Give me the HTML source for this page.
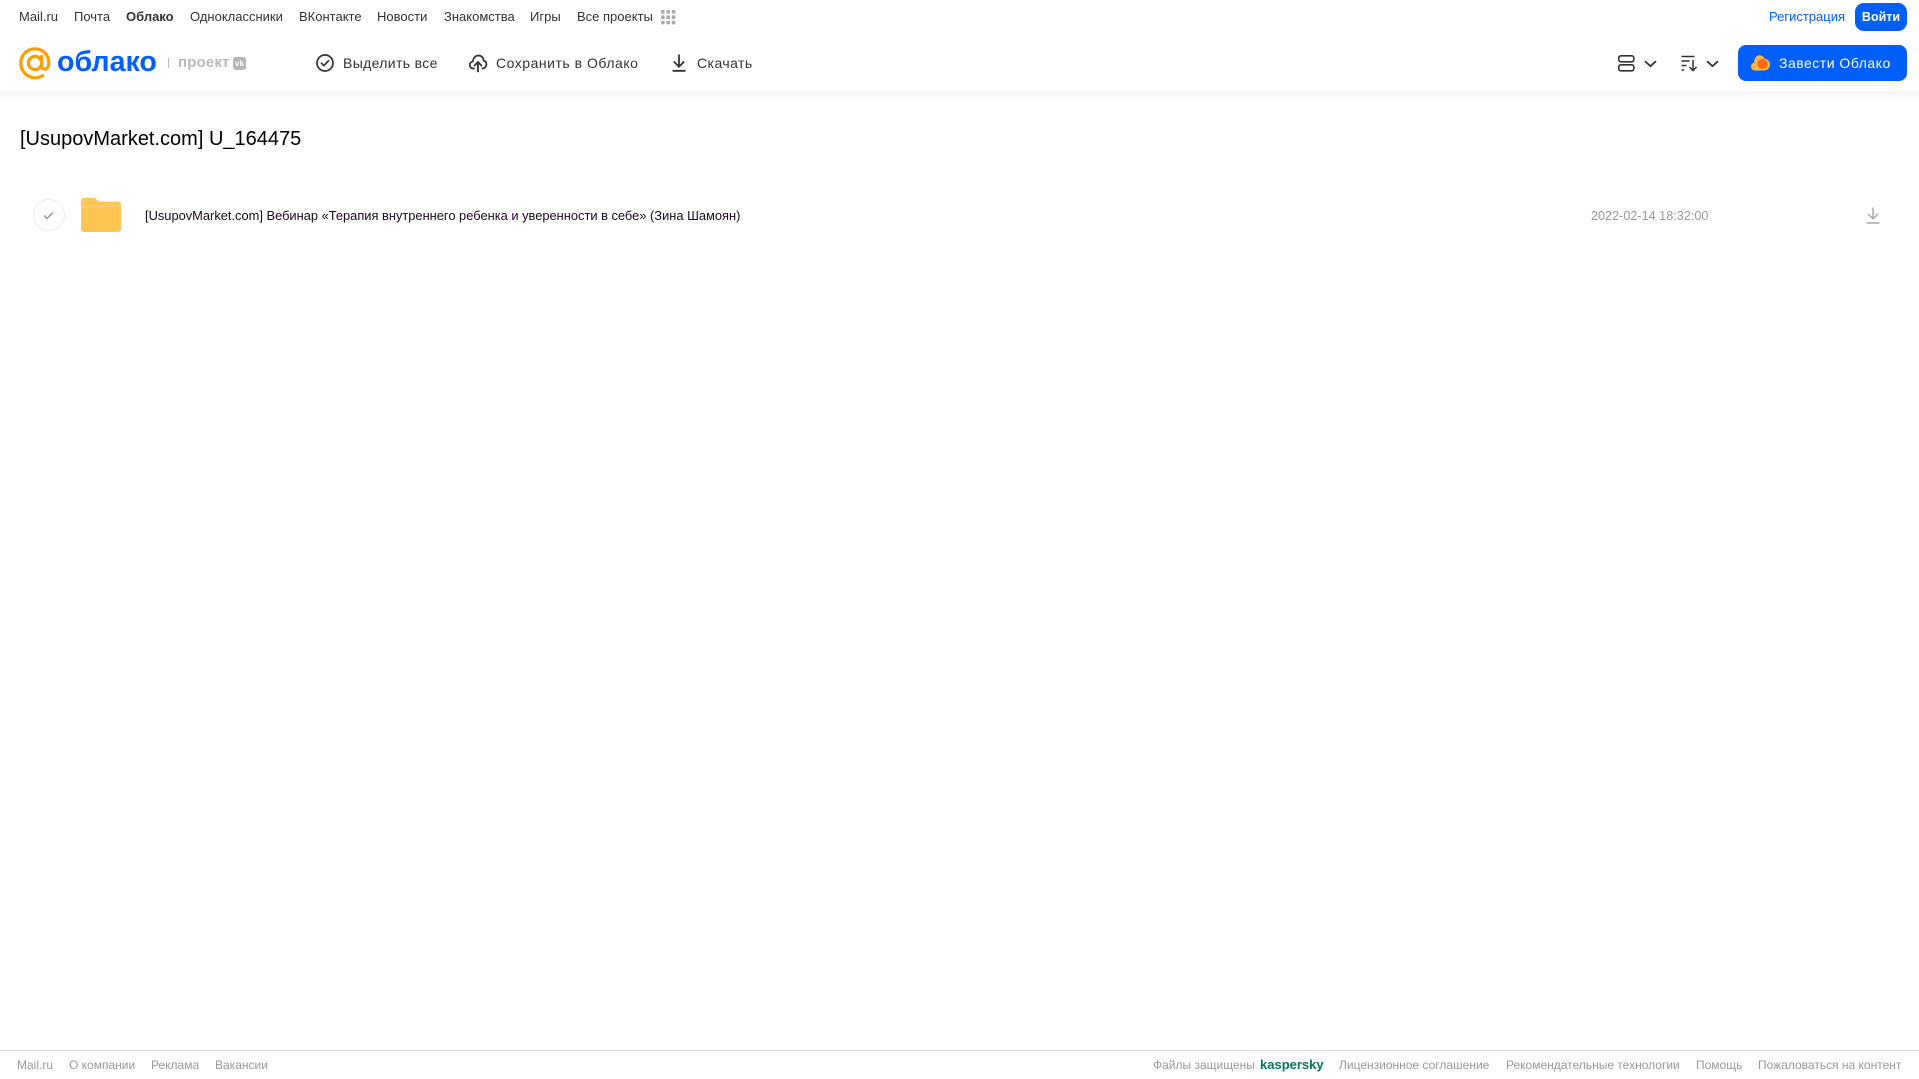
<!DOCTYPE html>
<html lang="ru"><head><meta charset="utf-8"><title>Облако</title>
<style>
html,body{margin:0;padding:0;background:#fff;overflow:hidden}
#p{position:relative;width:1919px;height:1079px;overflow:hidden;font-family:"Liberation Sans",Arial,sans-serif;background:#fff}
.t{position:absolute;white-space:nowrap;line-height:20px;height:20px}
.n{top:7px;font-size:13px;color:#333}
.b{top:53px;font-size:14px;color:#333}
.f{top:1055px;font-size:12px;color:#999}
svg{position:absolute;overflow:visible}
</style></head><body><div id="p">
<div style="position:absolute;left:0;top:91px;width:1919px;height:9px;background:linear-gradient(#f3f3f3,#fff)"></div>

<span class="t n" style="left:19px">Mail.ru</span>
<span class="t n" style="left:74px">Почта</span>
<span class="t n" style="left:126px;font-weight:700">Облако</span>
<span class="t n" style="left:190px">Одноклассники</span>
<span class="t n" style="left:299px">ВКонтакте</span>
<span class="t n" style="left:377px">Новости</span>
<span class="t n" style="left:444px">Знакомства</span>
<span class="t n" style="left:530px">Игры</span>
<span class="t n" style="left:577px">Все проекты</span>
<svg style="left:661px;top:10px" width="15" height="15" fill="#aaa"><rect width="3.6" height="3.6" rx=".8"/><rect x="5.4" width="3.6" height="3.6" rx=".8"/><rect x="10.8" width="3.6" height="3.6" rx=".8"/><rect y="5.4" width="3.6" height="3.6" rx=".8"/><rect x="5.4" y="5.4" width="3.6" height="3.6" rx=".8"/><rect x="10.8" y="5.4" width="3.6" height="3.6" rx=".8"/><rect y="10.8" width="3.6" height="3.6" rx=".8"/><rect x="5.4" y="10.8" width="3.6" height="3.6" rx=".8"/><rect x="10.8" y="10.8" width="3.6" height="3.6" rx=".8"/></svg>

<svg style="left:19px;top:47px" width="33" height="33" fill="none" stroke="#ff9e00" stroke-width="3.2"><circle cx="16" cy="16" r="6.6"/><path d="M22.600 9.500v9.200c0 5 7.200 5 7.200-2.700C29.800 8 24 1.800 16 1.800 8.200 1.800 1.800 8.200 1.800 16.200s6.400 14.600 14.200 14.600c3 0 5.500-.7 7.700-2.100" stroke-linecap="round"/></svg>
<span class="t" style="left:57px;top:47px;font-size:28.6px;line-height:30px;height:30px;font-weight:700;color:#005ff9">облако</span>
<div style="position:absolute;left:168px;top:58px;width:1px;height:10px;background:#bbb"></div>
<span class="t" style="left:178px;top:53px;font-size:15px;font-weight:700;color:#b9b9b9;letter-spacing:.15px">проект</span>
<div style="position:absolute;left:233px;top:57px;width:13px;height:13px;border-radius:3px;background:#b4b4b4;color:#fff;font:700 8px/13px 'Liberation Sans',sans-serif;text-align:center">vk</div>

<svg style="left:316px;top:54px" width="18" height="18" fill="none" stroke="#333" stroke-width="1.700"><circle cx="9" cy="9" r="8"/><path d="M5.500 9.300l2.400 2.300 4.700-4.900" stroke-linecap="round" stroke-linejoin="round"/></svg>
<span class="t b" style="left:343px;letter-spacing:.35px">Выделить все</span>
<svg style="left:469px;top:54px" width="18" height="18" fill="none" stroke="#333" stroke-width="1.800" stroke-linecap="round" stroke-linejoin="round"><path d="M5 14.500H4.300C2.200 14.500.8 13 .8 11c0-1.800 1.300-3.300 3-3.500C4.300 4.200 6.300 1.500 9.500 1.500c3 0 5 2.400 5.200 5 1.600.4 2.700 2 2.700 3.700 0 2.300-1.600 4.300-4 4.300"/><path d="M9 17.500V8.500M5.600 11.500L9 8l3.400 3.500"/></svg>
<span class="t b" style="left:496px;letter-spacing:.52px">Сохранить в Облако</span>
<svg style="left:672px;top:54px" width="14" height="18" fill="none" stroke="#333" stroke-width="1.800"><path d="M7 .5v12M1.800 7.500L7 12.700l5.200-5.200M.5 16.800h13"/></svg>
<span class="t b" style="left:697px;letter-spacing:.45px">Скачать</span>

<span class="t n" style="left:1769px;color:#005ff9">Регистрация</span>
<div style="position:absolute;left:1855px;top:3px;width:52px;height:28px;border-radius:9px;background:#005ff9;color:#fff;font:700 12.500px/28px 'Liberation Sans',sans-serif;text-align:center">Войти</div>

<svg style="left:1618px;top:55px" width="17" height="17" fill="none" stroke="#333" stroke-width="1.600"><rect x=".8" y=".8" width="15" height="6" rx="2"/><rect x=".8" y="9.800" width="15" height="6" rx="2"/></svg>
<svg style="left:1644px;top:60px" width="13" height="8" fill="none" stroke="#333" stroke-width="1.800"><path d="M1 1.200l5.500 5 5.500-5"/></svg>
<svg style="left:1681px;top:55px" width="17" height="17" fill="none" stroke="#333" stroke-width="1.500"><path d="M.5 1.500h13M.5 6h8M.5 10.500h5M.5 15h2.500M12 5v10.500M8.500 12l3.500 3.700 3.500-3.700"/></svg>
<svg style="left:1706px;top:60px" width="13" height="8" fill="none" stroke="#333" stroke-width="1.800"><path d="M1 1.200l5.500 5 5.500-5"/></svg>

<div style="position:absolute;left:1738px;top:45px;width:169px;height:36px;border-radius:8px;background:#005ff9"></div>
<svg style="left:1751px;top:55px" width="19" height="16"><path d="M4 15.500C1.800 15.500 0 13.800 0 11.500c0-1.900 1.300-3.400 3-3.800C3.400 3.300 5.500.3 8.500.3c2.400 0 4 1.400 5 3.300 3 .3 5.500 2.800 5.500 5.900 0 3.400-2.600 6-6 6z" fill="#ffb340"/><circle cx="11.500" cy="9" r="5" fill="#ff6a13"/></svg>
<span class="t" style="left:1779px;top:53px;font-size:14px;color:#fff;letter-spacing:.5px">Завести Облако</span>

<span class="t" style="left:20px;top:127px;font-size:20px;line-height:24px;height:24px;color:#000">[UsupovMarket.com] U_164475</span>

<div style="position:absolute;left:33px;top:199px;width:30px;height:30px;border-radius:50%;border:1px solid #ebebeb"></div>
<svg style="left:43px;top:211px" width="11" height="9" fill="none" stroke="#999" stroke-width="1.500"><path d="M1 4.500l3 3 6-6"/></svg>
<svg style="left:81px;top:198px" width="40" height="34"><path d="M3 0h9c2 0 3 .7 4 2l1.500 1.500H37c1.700 0 3 1.300 3 3V31c0 1.700-1.300 3-3 3H3c-1.700 0-3-1.300-3-3V3C0 1.300 1.300 0 3 0z" fill="#ffc654"/><path d="M0 8h40v1H0z" fill="#ffd27a"/></svg>
<span class="t" style="left:145px;top:206px;font-size:12.870px;color:#1a0a1f">[UsupovMarket.com] Вебинар «Терапия внутреннего ребенка и уверенности в себе» (Зина Шамоян)</span>
<span class="t" style="left:1591px;top:206px;font-size:12.650px;color:#999">2022-02-14 18:32:00</span>
<svg style="left:1866px;top:207px" width="14" height="17" fill="none" stroke="#aaa" stroke-width="1.500"><path d="M7 .5v11M2 6.800L7 11.800l5-5M.5 16h13"/></svg>

<div style="position:absolute;left:0;top:1050px;width:1919px;height:1px;background:#d8d8d8"></div>
<span class="t f" style="left:17px">Mail.ru</span>
<span class="t f" style="left:69px">О компании</span>
<span class="t f" style="left:151px">Реклама</span>
<span class="t f" style="left:215px">Вакансии</span>
<span class="t f" style="left:1153px">Файлы защищены</span>
<span class="t f" style="left:1260px;font-weight:700;font-size:13px;color:#00795f">kaspersky</span>
<span class="t f" style="left:1339px">Лицензионное соглашение</span>
<span class="t f" style="left:1506px">Рекомендательные технологии</span>
<span class="t f" style="left:1696px">Помощь</span>
<span class="t f" style="left:1758px">Пожаловаться на контент</span>
</div></body></html>
